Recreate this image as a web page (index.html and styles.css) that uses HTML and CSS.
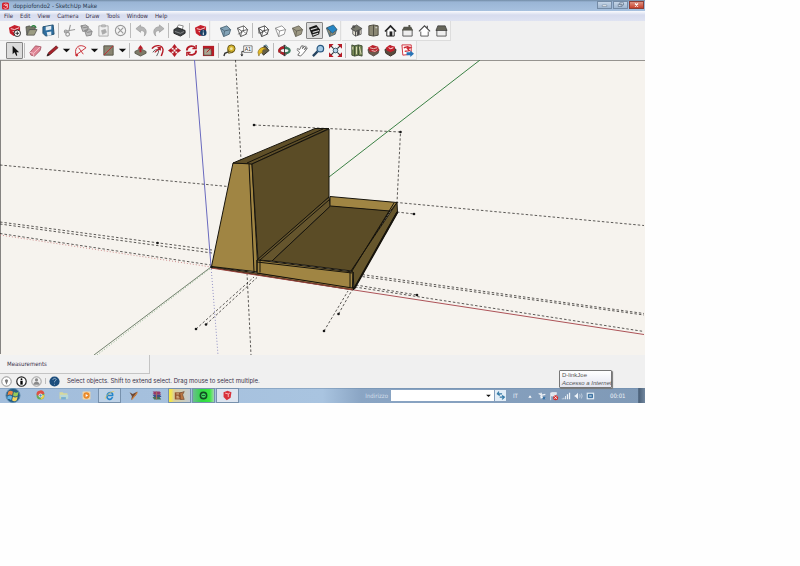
FILE: index.html
```html
<!DOCTYPE html>
<html lang="en">
<head>
<meta charset="utf-8">
<title>doppiofondo2 - SketchUp Make</title>
<link rel="stylesheet" href="styles.css">
</head>
<body>
<svg class="defs" aria-hidden="true">
  <defs>
    <g id="logo"><path d="M1 4l6-3 6 2v4l-3 5-4 1-4-3z" fill="#c61f2b"/><path d="M3 5l4 1 5-2M5 8l3 1" fill="none" stroke="#f6dada" stroke-width="1"/></g>
    <g id="caret"><path d="M2 5h8L6 9z" fill="#111"/></g>
    <g id="box"><path d="M1.500 4.500l7-2.500 4 4-1.500 5-6 2.500z"/><path d="M1.500 4.500L6 7.500l6.500-1.500M6 7.500l-1 6" fill="none"/></g>
  </defs>
</svg>
<div class="desktop">
  <header class="titlebar">
    <svg class="appicon" viewBox="0 0 14 14"><rect width="14" height="14" rx="3" fill="#d4202b"/><path d="M3 5l4-2 4 1v2L7 5 6 6l5 1v3l-4 2-4-2" fill="none" stroke="#fff" stroke-width="1.200"/></svg>
    <h1>doppiofondo2 - SketchUp Make</h1>
    <div class="winbuttons">
      <button aria-label="Minimize"><svg viewBox="0 0 14 8"><path d="M4 4h6v2H4z" fill="#fff" stroke="#53667d" stroke-width=".6"/></svg></button>
      <button aria-label="Restore"><svg viewBox="0 0 14 8"><path d="M6 1h5v3H6zM4 3h5v3H4z" fill="#dce6f1" stroke="#53667d" stroke-width=".8"/></svg></button>
      <button class="close" aria-label="Close"><svg viewBox="0 0 14 8"><path d="M5 2l4 4M9 2L5 6" stroke="#fff" stroke-width="1.500"/></svg></button>
    </div>
  </header>
  <nav class="menubar">
    <button>File</button><button>Edit</button><button>View</button><button>Camera</button><button>Draw</button><button>Tools</button><button>Window</button><button>Help</button>
  </nav>
  <div class="toolbars">
    <div class="toolrow">
      <div class="group">
        <button aria-label="New"><svg viewBox="0 0 14 14"><use href="#logo"/><circle cx="10" cy="10" r="3.500" fill="#fff" stroke="#222"/><path d="M8 10h4M10 8v4" stroke="#222"/></svg></button>
        <button aria-label="Open"><svg viewBox="0 0 14 14"><path d="M1 3l4-1 1 1h5v3H4l-2 6z" fill="#777a68" stroke="#444" stroke-width=".7"/><path d="M2 12l3-6h8l-3 6z" fill="#9b9c83" stroke="#444" stroke-width=".7"/><path d="M7 3q3-3 5 1" fill="none" stroke="#28823b" stroke-width="1.500"/></svg></button>
        <button aria-label="Save"><svg viewBox="0 0 14 14"><path d="M1 3l11-2 1 10-9 2-3-3z" fill="#2d6d9e" stroke="#23506f"/><path d="M4 3l6-1v4L4 7zM5 9l5-1v4l-4 1z" fill="#e4edf3"/></svg></button>
        <i class="sep"></i>
        <button aria-label="Cut"><svg viewBox="0 0 14 14" fill="none" stroke="#999" stroke-width="1.200"><path d="M8 1L6 9M1 8l12-2"/><circle cx="5" cy="11" r="2"/><circle cx="3" cy="8" r="1.500"/></svg></button>
        <button aria-label="Copy"><svg viewBox="0 0 14 14" fill="#bbb" stroke="#888"><path d="M1 2l5-1 3 2-1 4-5 1zM5 7l5-2 3 3-1 4-5 1z"/><path d="M1 2l3 2 5-1M5 7l3 2 5-1" fill="none"/></svg></button>
        <button aria-label="Paste"><svg viewBox="0 0 14 14" fill="#eee" stroke="#aaa"><path d="M2 2h10v11H2zM5 1h4v2H5z"/><path d="M5 7l4-1 1 3-4 2z" fill="#aaa"/></svg></button>
        <button aria-label="Erase"><svg viewBox="0 0 14 14" fill="none" stroke="#999" stroke-width="1.200"><circle cx="7" cy="7" r="5.500"/><path d="M4 4l6 6M10 4l-6 6"/></svg></button>
        <i class="sep"></i>
        <button aria-label="Undo"><svg viewBox="0 0 14 14"><path d="M1 5l5-4v2c6 0 8 6 4 10 1-4 0-6-4-6v2z" fill="#b5b5b5" stroke="#999" stroke-width=".7"/></svg></button>
        <button aria-label="Redo"><svg viewBox="0 0 14 14"><path d="M13 5L8 1v2C2 3 0 9 4 13 3 9 4 7 8 7v2z" fill="#b5b5b5" stroke="#999" stroke-width=".7"/></svg></button>
        <i class="sep"></i>
        <button aria-label="Print"><svg viewBox="0 0 14 14"><path d="M4 4l2-3 5 1-1 4z" fill="#fff" stroke="#555" stroke-width=".7"/><path d="M1 6l4-2 8 3v3l-5 3-7-3z" fill="#3e4245" stroke="#222"/><path d="M2 8l6 2 4-2" fill="none" stroke="#aaa" stroke-width=".7"/></svg></button>
        <i class="sep"></i>
        <button aria-label="Model Info"><svg viewBox="0 0 14 14"><use href="#logo"/><circle cx="10" cy="9.500" r="3.500" fill="#173f65"/><path d="M10 7v1M10 9v3" stroke="#fff"/></svg></button>
      </div>
      <div class="group">
        <button aria-label="X-Ray"><svg viewBox="0 0 14 14" fill="#83a3b7" stroke="#4f6979"><use href="#box"/></svg></button>
        <button aria-label="Back Edges"><svg viewBox="0 0 14 14" fill="#fff" stroke="#555"><use href="#box"/><path d="M8 2v6l4 3M8 8l-6 3" stroke-width=".7" fill="none"/></svg></button>
        <i class="sep"></i>
        <button aria-label="Wireframe"><svg viewBox="0 0 14 14" fill="#fff" stroke="#444"><use href="#box"/><path d="M8 2v6l4 3M8 8l-6 2V5" stroke-width=".8" fill="none"/></svg></button>
        <button aria-label="Hidden Line"><svg viewBox="0 0 14 14" fill="#fff" stroke="#777" stroke-width=".8"><use href="#box"/></svg></button>
        <button aria-label="Shaded"><svg viewBox="0 0 14 14" fill="#9c9883" stroke="#5e5b4e" stroke-width=".8"><use href="#box"/></svg></button>
        <button class="on" aria-label="Shaded With Textures"><svg viewBox="0 0 14 14"><path d="M1 4l8-3 4 5-1 5-7 3z" fill="#151515"/><path d="M3 6l7-2M5 9l7-2M5 12l6-2" stroke="#d9d9d9" stroke-width="1.300"/></svg></button>
        <button aria-label="Monochrome"><svg viewBox="0 0 14 14" fill="#8e8974" stroke="#39596c" stroke-width=".8"><use href="#box"/><path d="M2 4l7-3 4 5-5 4z" fill="#2585c4"/></svg></button>
      </div>
      <div class="group">
        <button aria-label="Iso"><svg viewBox="0 0 14 14" stroke="#444" stroke-width=".8"><path d="M3 6l3 2v5l-3-2zM6 8l6-2v5l-6 2z" fill="#e5e2d5"/><path d="M1 5l6-4 6 4-7 3zM3 2h2v2H3z" fill="#77786c"/><path d="M8 8l2-1v4l-2 1z" fill="#444"/></svg></button>
        <button aria-label="Top"><svg viewBox="0 0 14 14"><path d="M2 2l5-1 5 1v10l-5 1-5-1z" fill="#8b8874" stroke="#4c4a3f"/><path d="M7 1v12" stroke="#4c4a3f"/><path d="M9 4h2" stroke="#ddd"/></svg></button>
        <button aria-label="Front"><svg viewBox="0 0 14 14"><path d="M3 7v6h8V7L7 3z" fill="#fff" stroke="#222"/><path d="M1 8l6-6 6 6" fill="none" stroke="#222" stroke-width="1.500"/><path d="M6 8h3v5H6z" fill="#222"/></svg></button>
        <button aria-label="Right"><svg viewBox="0 0 14 14"><path d="M2 6h10v7H2z" fill="#eee" stroke="#555"/><path d="M3 3h8l2 4H1zM8 1h2v2H8z" fill="#55564b"/></svg></button>
        <button aria-label="Back"><svg viewBox="0 0 14 14"><path d="M3 7v6h8V7" fill="#fff" stroke="#555"/><path d="M1 8l6-6 6 6M10 2v3" fill="#fff" stroke="#444" stroke-width="1.200"/></svg></button>
        <button aria-label="Left"><svg viewBox="0 0 14 14"><path d="M2 6h10v7H2z" fill="#eee" stroke="#555"/><path d="M3 2h8l2 5H1z" fill="#67675b" stroke="#333" stroke-width=".7"/></svg></button>
      </div>
    </div>
    <div class="toolrow">
      <div class="group">
        <button class="on" aria-label="Select"><svg viewBox="0 0 14 14"><path d="M5 2v9l2-2 2 4 1-1-1-3h3z" fill="#111"/></svg></button>
        <i class="sep"></i>
        <button aria-label="Eraser"><svg viewBox="0 0 14 14"><path d="M1 9l6-7 6 1-1 4-6 6-4-1z" fill="#de8393" stroke="#9c4b5c" stroke-width=".8"/><path d="M1 9l4 1 7-7M5 10v3" fill="none" stroke="#f4c4cc"/></svg></button>
        <button aria-label="Line"><svg viewBox="0 0 14 14"><path d="M1 13l2-4 8-7 2 2-8 7z" fill="#a7212a" stroke="#5a1a1c" stroke-width=".7"/><path d="M1 13l1-3 2 2z" fill="#222"/></svg></button>
        <button class="drop" aria-label="Line tools"><svg viewBox="0 0 12 14"><use href="#caret"/></svg></button>
        <button aria-label="Arc"><svg viewBox="0 0 14 14" fill="none" stroke="#c92932"><path d="M2 11C0 3 7-1 13 4L2 12zM5 4l5 7"/><circle cx="3" cy="12" r="1" fill="#c92932"/></svg></button>
        <button class="drop" aria-label="Arc tools"><svg viewBox="0 0 12 14"><use href="#caret"/></svg></button>
        <button aria-label="Rectangle"><svg viewBox="0 0 14 14"><path d="M2 2h10v10H2z" fill="#898571" stroke="#514f43"/><path d="M2 12L12 2" stroke="#c92932"/></svg></button>
        <button class="drop" aria-label="Shape tools"><svg viewBox="0 0 12 14"><use href="#caret"/></svg></button>
        <i class="sep"></i>
        <button aria-label="Push/Pull"><svg viewBox="0 0 14 14"><path d="M1 8l6-3 6 3v2l-6 3-6-3z" fill="#7d7b68" stroke="#48463b" stroke-width=".8"/><path d="M7 1l3 4H8v4H6V5H4z" fill="#b51c27"/></svg></button>
        <button aria-label="Offset"><svg viewBox="0 0 14 14" fill="none" stroke="#b51c27"><path d="M1 5C5 0 12 1 13 6c0 3-1 4-2 7" stroke-width="1.500"/><path d="M2 9c2-4 7-4 6 0L6 13" stroke="#555"/><path d="M4 9l6-5M7 4h3v3" stroke-width="1.300"/></svg></button>
        <button aria-label="Move"><svg viewBox="0 0 14 14" fill="#b51c27"><path d="M7 0l3 4H4zM7 14l3-4H4zM0 7l4-3v6zM14 7l-4-3v6zM6 4h2v2H6zM6 8h2v2H6zM4 6h2v2H4zM8 6h2v2H8z"/></svg></button>
        <button aria-label="Rotate"><svg viewBox="0 0 14 14" fill="none" stroke="#b51c27" stroke-width="2"><path d="M2 7c0-5 6-6 9-3M12 7c0 5-6 6-9 3"/><path d="M12 1v4H8M2 13V9h4" stroke-width="1.500"/></svg></button>
        <button aria-label="Scale"><svg viewBox="0 0 14 14"><path d="M1 2h12v11H1z" fill="#b51c27"/><path d="M2 5h8v7H2z" fill="#aaa794" stroke="#4c493d" stroke-width=".7"/><path d="M5 9l5-5M7 4h3v3" fill="none" stroke="#b51c27"/></svg></button>
        <i class="sep"></i>
        <button aria-label="Tape Measure"><svg viewBox="0 0 14 14"><path d="M1 13l1-3 5-2" fill="none" stroke="#333" stroke-width="1.500"/><circle cx="9" cy="5" r="4" fill="#d3b32f" stroke="#655416"/><circle cx="9" cy="5" r="1.500" fill="#f2e8a8"/><path d="M5 6l1 4 5-1" fill="none" stroke="#746119"/></svg></button>
        <button aria-label="Text"><svg viewBox="0 0 14 14"><path d="M4 2h9v7H4z" fill="#fff" stroke="#555" stroke-width=".8"/><path d="M4 8H2v5M1 11l1 2 1-2" fill="none" stroke="#333"/><text x="5" y="8" class="glyph">A1</text></svg></button>
        <button aria-label="Paint Bucket"><svg viewBox="0 0 14 14"><path d="M3 6l6-4 4 5-6 5z" fill="#645f48" stroke="#302f28"/><path d="M1 9c1-5 6-7 9-3-3-1-5 1-4 4-2-1-3 0-4 3z" fill="#e3ba25" stroke="#79601b" stroke-width=".6"/><path d="M7 2l3-1 2 3" fill="none" stroke="#4d778c"/></svg></button>
        <i class="sep"></i>
        <button aria-label="Orbit"><svg viewBox="0 0 14 14" fill="none"><ellipse cx="7" cy="7" rx="5.500" ry="3" stroke="#38775a" stroke-width="2.500"/><path d="M2 9c-2-3 2-6 5-5M8 10c-2 1-4 0-5-1" stroke="#b51c27" stroke-width="2.500"/><path d="M7 1v12M5 3l2-2 2 2M5 11l2 2 2-2" stroke="#333"/></svg></button>
        <button aria-label="Pan"><svg viewBox="0 0 14 14"><path d="M3 12l2-3-3-3 1-1 2 1 2-4h2l-1 3 3-3 1 1-2 3 3-2v1l-4 5-3 3z" fill="#fff" stroke="#555" stroke-width=".9"/></svg></button>
        <button aria-label="Zoom"><svg viewBox="0 0 14 14"><path d="M1 13l5-5" stroke="#24435f" stroke-width="2.500"/><circle cx="9" cy="5" r="3.500" fill="#a4c9e4" stroke="#285780" stroke-width="1.300"/></svg></button>
        <button aria-label="Zoom Extents"><svg viewBox="0 0 14 14"><path d="M1 1l4 4M13 1L9 5M1 13l4-4M13 13L9 9" stroke="#333" stroke-width="1.200"/><path d="M0 0h5L0 5zM14 0H9l5 5zM0 14h5L0 9zM14 14H9l5-5z" fill="#b51c27"/><circle cx="7" cy="7" r="2.500" fill="#b4d2e6" stroke="#36546a"/></svg></button>
        <i class="sep"></i>
        <button aria-label="Add Location"><svg viewBox="0 0 14 14"><path d="M2 1l3 1 4-1 4 1v11l-4-1-4 1-3-1z" fill="#778a55" stroke="#3e4a33"/><path d="M5 2v11M9 1v11" stroke="#37442f"/><path d="M10 3l2 8M3 3v3M7 3v8" stroke="#dfddbb"/></svg></button>
        <button aria-label="Get Models"><svg viewBox="0 0 14 14"><path d="M1 6l6-3 6 3-1 4-5 3-5-3z" fill="#6b5a4c" stroke="#332b25" stroke-width=".7"/><path d="M1 4l5-3 6 2 1 4-4 2-6-1z" fill="#b9222d"/><path d="M3 4l4 1 4-1M5 7l4 1 2-2" fill="none" stroke="#ead0c8"/></svg></button>
        <button aria-label="Share Model"><svg viewBox="0 0 14 14"><path d="M1 6l6-4 6 4-1 4-5 3-5-3z" fill="#5a4b3d" stroke="#332b25"/><path d="M2 4l4-3 6 2-1 4-4 2-4-2z" fill="#c4202c"/><path d="M5 4l2 1 3-1" fill="none" stroke="#fff"/></svg></button>
        <button aria-label="Extension Warehouse"><svg viewBox="0 0 14 14"><path d="M1 1h10v10l-9 1z" fill="#fff" stroke="#cc2933"/><path d="M3 4l4-1 3 1-3 1 2 2-5 1" fill="none" stroke="#cc2933" stroke-width="1.500"/><path d="M6 9h4V7l4 3.500-4 3.500v-2H6z" fill="#2874b7"/></svg></button>
      </div>
    </div>
  </div>
  <main class="canvas">
    <svg viewBox="0 60 645 295" role="img" aria-label="3D model view">
      <path d="M0 60.500h645" stroke="#96938f"/><path d="M.5 60v294" stroke="#858381"/>
      <g fill="none" stroke="#33312e" stroke-width=".8" stroke-dasharray="2.500 2">
        <path d="M235.500 60L241 160M247 273l4 82M0 165l228 21.500M0 222l212 28M0 224l212 29M0 233.500L211 265"/>
        <path d="M196 329l58-52M206 324.500l51-47M324 331l24-40M338.500 314l13-23"/>
        <path d="M254 125l146.500 7-3.500 70.500 247 23M397 212l17 2M358 274l286 39.500M358 276l286 39M355 287l289 44.500M356 285l61 10"/>
      </g>
      <path d="M194.500 60L211 266" stroke="#6a6abf"/>
      <path d="M211 266l7 89" stroke="#7777bb" stroke-width=".8" stroke-dasharray="1 2"/>
      <path d="M0 235l211 32" stroke="#c77676" stroke-width=".8" stroke-dasharray="1 2"/>
      <path d="M329 177L480 60" stroke="#3b8145"/>
      <path d="M94 355l117-88" stroke="#53664f" stroke-width=".8"/>
      <path d="M97 355l114-87" stroke="#71a171" stroke-width=".8" stroke-dasharray="1 2"/>
      <path d="M354 290l290 44.500" stroke="#ad5358"/>
      <g stroke="#17140c" stroke-linejoin="round" stroke-width="1">
        <path d="M211.500 266.500l142 20.500v3l-142-22.500z" fill="#9b703e"/>
        <path d="M233 163l16.500.5 5 108-43-5z" fill="#a08543"/>
        <path d="M249 163.500l3 .5 6 108-4-.5z" fill="#a08543"/>
        <path d="M233 163l82-34.500h14L252 164z" fill="#5f4f28"/>
        <path d="M247 163l76-34"/>
        <path d="M252 164l77-35v68l-71 63z" fill="#5b4c26"/>
        <path d="M329 197l1.500 9-58.500 55-15-1z" fill="#65552d"/>
        <path d="M330 196.500l67 6-7 9-60-5z" fill="#a08543"/>
        <path d="M330.500 206l59.500 5-38 60-80-10z" fill="#5b4c26"/>
        <path d="M397 202.500l.5 10L354 289l-1-17-2-1z" fill="#66562c"/>
        <path d="M394 203l-42 68M397 212l-43 77"/>
        <path d="M257 260l96 12-.5 16-95.500-15z" fill="#a08543"/>
        <path d="M260 260v12.500M257 260v12M350 272v15M257 262l95 11M329 200l-69 60M353 272v17"/>
        <path d="M397.500 212L354 289" stroke-width="2"/>
      </g>
      <path d="M211 268l142 22" stroke="#9b433c"/>
      <g fill="#171717">
        <circle cx="254" cy="125" r="1.300"/><circle cx="400.500" cy="132" r="1.300"/><circle cx="414" cy="214" r="1.300"/><circle cx="417" cy="295" r="1.300"/><circle cx="157.500" cy="243" r="1.300"/><circle cx="196" cy="329" r="1.300"/><circle cx="206" cy="324.500" r="1.300"/><circle cx="324" cy="331" r="1.300"/><circle cx="338.500" cy="314" r="1.300"/><circle cx="211.500" cy="267" r="1.300"/>
      </g>
    </svg>
  </main>
  <div class="measure"><label for="measurements">Measurements</label><input id="measurements" type="text"></div>
  <footer class="status">
    <svg viewBox="0 0 14 14"><circle cx="7" cy="7" r="6" fill="#fff" stroke="#777"/><path d="M7 11L5 6a2 2 0 1 1 4 0z" fill="#777"/></svg>
    <svg viewBox="0 0 14 14"><circle cx="7" cy="7" r="6" fill="#fff" stroke="#222" stroke-width="1.500"/><circle cx="7" cy="4" r="1.200"/><path d="M5.500 6h3v5h-3z"/></svg>
    <svg viewBox="0 0 14 14"><circle cx="7" cy="7" r="6" fill="#eee" stroke="#888"/><circle cx="7" cy="5" r="2" fill="#888"/><path d="M3 11c0-5 8-5 8 0z" fill="#888"/></svg>
    <i class="sep"></i>
    <svg viewBox="0 0 14 14"><circle cx="7" cy="7" r="6.500" fill="#1d4e7d"/><path d="M5 5c0-3 5-2 4 0-.5 1-2 1-2 3M7 10v1" fill="none" stroke="#9db8d0" stroke-width="1.200"/></svg>
    <p>Select objects. Shift to extend select. Drag mouse to select multiple.</p>
  </footer>
  <div class="taskbar">
    <button class="start" aria-label="Start"><svg viewBox="0 0 18 16"><circle cx="9" cy="8" r="7.500" fill="#245c83" stroke="#5c8cad"/><path d="M4 4q2-2 5 0L8 8Q6 6 3 8z" fill="#ee8841"/><path d="M10 4q2 2 5 0l-1 4q-2 2-5 0z" fill="#97c957"/><path d="M3 9q3-2 5 0l-1 4q-2-2-4-1z" fill="#62b3e4"/><path d="M9 9q2 2 5 0l-1 4q-3 2-5 0z" fill="#f6d35b"/></svg></button>
    <div class="apps">
      <button aria-label="Chrome"><svg viewBox="0 0 14 14"><circle cx="7" cy="7" r="5" fill="#66ad57"/><path d="M2 6a5 5 0 0 1 10-1H7L5 8z" fill="#dc5145"/><path d="M12 6a5 5 0 0 1-5 6l2-5z" fill="#efcb4c"/><circle cx="7" cy="7" r="2" fill="#578ec5" stroke="#fff"/></svg></button>
      <button aria-label="Explorer"><svg viewBox="0 0 14 14"><path d="M2 3h4l1 1h5v7H2z" fill="#d8d99b"/><path d="M2 6h11v5H4z" fill="#b8d8d8"/><path d="M4 9h6v3H4z" fill="#78afd0"/></svg></button>
      <button aria-label="Media Player"><svg viewBox="0 0 14 14"><rect x="2" y="2" width="10" height="10" rx="1" fill="#f2d5a7"/><circle cx="7" cy="7" r="4" fill="#ea8929"/><path d="M6 5l3 2-3 2z" fill="#fff"/></svg></button>
      <button class="open" aria-label="Internet Explorer"><svg viewBox="0 0 14 14"><path d="M11 9c-3 5-8 3-7-2s8-5 7 0H5" fill="none" stroke="#2485ca" stroke-width="2"/><path d="M2 11C-1 11 8 1 13 2" fill="none" stroke="#e9ca5b"/></svg></button>
      <button aria-label="Paint"><svg viewBox="0 0 14 14"><path d="M2 3l4 2 6-3-2 5-3 2-3 4 1-5z" fill="#6d4937"/><path d="M5 12l7-9" stroke="#d1833f" stroke-width="1.500"/></svg></button>
      <button aria-label="Archiver"><svg viewBox="0 0 14 14"><path d="M2 2h9l2 2H4zM2 4h9l2 2H4z" fill="#963769"/><path d="M2 6h9l2 2v1H4z" fill="#3d4f8a"/><path d="M2 9h9l2 3H4z" fill="#437053"/><path d="M7 2v10" stroke="#a8685f" stroke-width="1.500"/></svg></button>
      <button class="open yellow" aria-label="Documents"><svg viewBox="0 0 14 14"><path d="M1 3h9v9H1z" fill="#94552e"/><path d="M3 5h4M3 8h3M3 10h4" stroke="#f2dfb6"/><path d="M7 4l6-2-2 4 2 6H8V7z" fill="#bb7642" stroke="#5d3827" stroke-width=".7"/></svg></button>
      <button class="open green" aria-label="Player"><svg viewBox="0 0 14 14"><circle cx="7" cy="7" r="4" fill="#42db63" stroke="#124e21" stroke-width="2"/><path d="M5 7h4" stroke="#124e21"/></svg></button>
      <button class="open light" aria-label="SketchUp"><svg viewBox="0 0 14 14"><path d="M2 3l5-2 5 2-1 7-5 3-4-4z" fill="#d8313b"/><path d="M4 4l4 1 2-1M8 5v4" fill="none" stroke="#ffd2d2"/></svg></button>
    </div>
    <div class="address">
      <label for="addr">Indirizzo</label>
      <div class="combo"><input id="addr" type="text"><button aria-label="History"><svg viewBox="0 0 12 14"><path d="M3 6h6L6 9z" fill="#111"/></svg></button></div>
      <button class="go" aria-label="Go"><svg viewBox="0 0 14 14" fill="none" stroke="#347aa7" stroke-width="1.500"><path d="M5 2L3 5l3 2M3 5h6M9 12l3-3-3-2M12 9H6"/></svg></button>
    </div>
    <div class="tray">
      <span class="lang">IT</span>
      <svg viewBox="0 0 12 12"><path d="M4 8l2-3 2 3z" fill="#fff"/></svg>
      <svg viewBox="0 0 12 12"><path d="M2 3l4 2 4-1M4 6l6 3M5 2v7" fill="none" stroke="#f2f5f8" stroke-width="1.500"/><path d="M7 7h3v3H7z" fill="#3973a7"/></svg>
      <svg viewBox="0 0 12 12"><path d="M2 2v9M3 2h6l-1 4H3z" stroke="#eef2f6" fill="#dce5ed"/><circle cx="8" cy="8" r="3" fill="#d22d2d"/><path d="M6.500 6.500l3 3M9.500 6.500l-3 3" stroke="#fff"/></svg>
      <svg viewBox="0 0 12 12" fill="#eef3f8"><path d="M1 9h1v1H1zM3 8h1v2H3zM5 6h1v4H5zM7 4h1.500v6H7zM9.500 2H11v8H9.500z"/></svg>
      <svg viewBox="0 0 12 12"><path d="M2 5h1l3-3v8L3 7H2z" fill="#eef3f8"/><path d="M8 4q1 2 0 4M10 3q2 3 0 6" fill="none" stroke="#dbe4ed" stroke-width=".8"/></svg>
      <svg viewBox="0 0 12 12"><path d="M2 2h9v8H2z" fill="#dfeaf3"/><path d="M4 4h5v4H4z" fill="#4279aa" stroke="#2e6699"/><path d="M5 6h3" stroke="#fff"/></svg>
      <time>00:01</time>
    </div>
    <button class="peek" aria-label="Show desktop"></button>
  </div>
  <div class="tooltip" role="tooltip"><span>D-linkJoe</span><em>Accesso a Internet</em></div>
</div>
</body>
</html>
```
FILE: styles.css
```css
* { box-sizing: border-box; }
body {
  margin: 0;
  padding-right: 155px;
  background: #fefefe;
  font: 6px/8px "DejaVu Sans Condensed", "DejaVu Sans", sans-serif;
  color: #38304a;
}
button, input { font: inherit; color: inherit; border: 0; padding: 0; margin: 0; background: none; border-radius: 0; }
svg { display: block; }
.defs { position: absolute; width: 0; height: 0; }
.desktop { position: relative; background: #f0f0f0; }

.titlebar {
  display: flex; align-items: center; height: 11px; padding: 0 1px 0 2px;
  background: linear-gradient(#718ba5, #9ab5d5 2px, #a7c1df);
}
.titlebar h1 { margin: 0 auto 0 4px; font-size: 6px; font-weight: 400; color: #26374d; }
.appicon { width: 7px; height: 8px; }
.winbuttons { display: flex; gap: 1px; align-self: flex-start; padding-top: 1px; }
.winbuttons button { width: 15px; height: 8px; border: 1px solid #748ba6; background: linear-gradient(#c5d5e7, #9fb6d0); }
.winbuttons svg { width: 100%; height: 6px; }
.winbuttons .close { border-color: #8c3e37; background: linear-gradient(#df9384, #c6402b); }

.menubar { display: flex; gap: 7px; height: 10px; padding: 0 4px; background: linear-gradient(#fafbfe, #d7dcee 4px, #dfe3f2); }

.toolbars { height: 39px; background: #f0f0f0; }
.toolrow { display: flex; gap: 1px; height: 20px; }
.toolrow + .toolrow { height: 19px; }
.group {
  display: flex; align-items: center; padding-left: 6px;
  border-right: 1px solid #ddd; border-bottom: 1px solid #dcdcdc;
  background: radial-gradient(circle, #b4b4b4 40%, transparent 50%) 2px 1px / 2px 2px repeat-y #f5f5f5;
}
.group button { width: 17px; height: 17px; padding: 2px; display: grid; place-items: center; }
.group svg { width: 13px; height: 13px; }
.group .on { padding: 1px; border: 1px solid #868686; background: #dcdcdc; border-radius: 1px; }
.group .drop { width: 11px; padding: 0; }
.group .drop svg { width: 11px; }
.sep { width: 1px; height: 15px; margin: 0 2px 0 1px; background: #bcbcbc; }
.glyph { font-size: 6px; fill: #333; }

.canvas { background: #f6f3ee; }
.canvas svg { width: 100%; height: auto; }

.measure {
  display: flex; align-items: center; width: 150px; height: 19px; padding-left: 7px;
  border: solid #c4c4c4; border-width: 0 1px 1px 0;
  background: radial-gradient(circle, #b4b4b4 40%, transparent 50%) 2px 0 / 2px 2px repeat-y #f2f2f2;
}
.measure input { flex: 1; min-width: 0; }
.status { display: flex; align-items: center; height: 14px; padding-left: 1px; gap: 4px; }
.status svg { width: 11px; height: 11px; }
.status .sep { height: 6px; margin: 0 -1px; }
.status p { margin: 0 0 0 3px; font-family: Inter, "DejaVu Sans", sans-serif; }

.taskbar {
  display: flex; height: 15px; align-items: stretch;
  background: linear-gradient(#6e8cac, transparent 1px), linear-gradient(90deg, #a2bddb, #a9c4e0 50%, #8aa5c4 56%, #7f99b6);
}
.start { width: 26px; margin-right: 3px; display: grid; place-items: center; }
.start svg { width: 18px; height: 15px; }
.apps { display: flex; gap: 1px; margin-right: auto; }
.apps button { width: 22px; display: grid; place-items: center; }
.apps svg { width: 11px; height: 11px; }
.apps .open { width: 23px; border: 1px solid #7791ad; background: #bdd1e6; }
.apps .yellow { background: linear-gradient(90deg, #f3e64c 2px, #d9cf9d 5px, #c3cbd2); }
.apps .green { background: linear-gradient(90deg, #6bbe8e, #31d745 40%, #3ae741 80%, #a2d7ae); }
.apps .light { background: #dce4ef; }
.address { display: flex; align-items: center; gap: 3px; color: #d3deea; }
.combo { display: flex; width: 103px; height: 11px; background: #fff; }
.combo input { flex: 1; min-width: 0; color: #222; }
.combo button { width: 11px; }
.combo svg { width: 11px; height: 11px; }
.go { width: 11px; height: 11px; margin-left: -2px; background: #e2edf7; }
.go svg { width: 11px; height: 11px; }
.tray { display: flex; align-items: center; gap: 2px; padding-left: 7px; color: #eef3f8; }
.tray svg { width: 10px; height: 10px; }
.lang { width: 10px; }
.tray time { width: 30px; padding-left: 13px; margin-right: 11px; }
.peek { width: 7px; border-left: 1px solid #566d86; background: linear-gradient(90deg, #4c6179, #71879f); }

.tooltip {
  position: absolute; right: 33px; bottom: 15px; width: 53px; height: 18px;
  padding: 0 2px; border: 1px solid #777; border-radius: 1px;
  background: linear-gradient(#fff, #e4e5f0); box-shadow: 1px 1px 1px #777;
  color: #555; white-space: nowrap; font-family: "Liberation Sans", sans-serif;
}
.tooltip span, .tooltip em { display: block; }
```
